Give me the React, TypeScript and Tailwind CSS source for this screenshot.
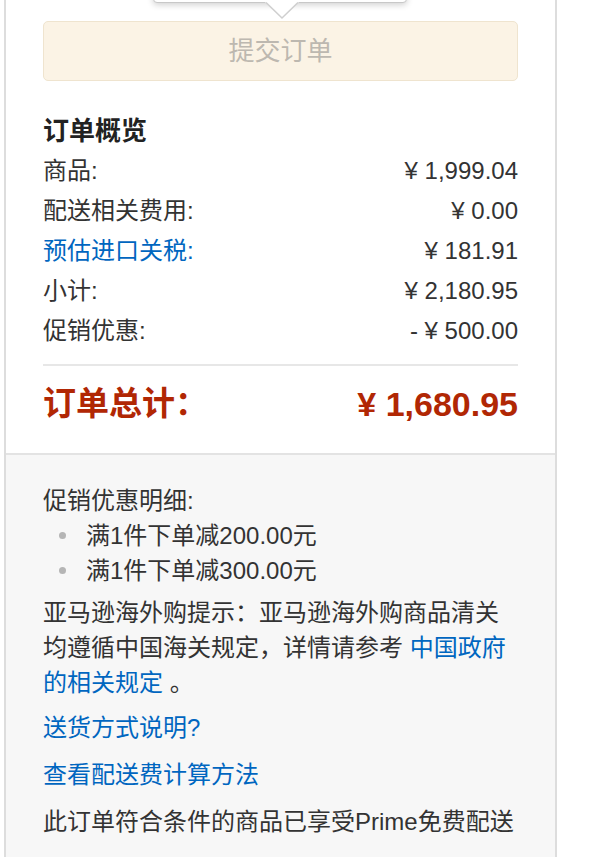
const FONT = { fontFamily: '"Liberation Sans", Arial, "Noto Sans CJK SC", sans-serif' };

const ROWS: { label: string; value: string; link?: boolean }[] = [
  { label: "商品:", value: "¥ 1,999.04" },
  { label: "配送相关费用:", value: "¥ 0.00" },
  { label: "预估进口关税:", value: "¥ 181.91", link: true },
  { label: "小计:", value: "¥ 2,180.95" },
  { label: "促销优惠:", value: "- ¥ 500.00" },
];

const PROMOS = ["满1件下单减200.00元", "满1件下单减300.00元"];

export default function App() {
  return (
    <div className="relative min-h-[857px] bg-white text-[#333]" style={FONT}>
      {/* tooltip popping above the button */}
      <div className="absolute left-[153px] top-[-40px] w-[254px] h-[43px] rounded-b-[4px] border border-[#c8c8c8] bg-white shadow-[0_2px_6px_rgba(0,0,0,0.18)] z-10" />
      <svg
        className="absolute left-[265px] top-[2px] z-20"
        width="34"
        height="18"
        viewBox="0 0 34 18"
      >
        <path d="M0 0 L17 16 L34 0 Z" fill="#fff" />
        <path d="M1 0.5 L17 16 L33 0.5" fill="none" stroke="#cfcfcf" strokeWidth="1.5" />
      </svg>

      <div className="ml-[4px] w-[553px] min-h-[857px] border-x-2 border-[#dddddd]">
        {/* white section */}
        <div className="px-[37px] pt-[21px] pb-[24px]">
          <button
            type="button"
            className="w-full h-[60px] rounded-[5px] border border-[#efe4cf] bg-[#fbf3e5] text-[26px] text-[#bdb8b0]"
          >
            提交订单
          </button>

          <h2 className="mt-[31px] text-[26px] leading-[39px] font-bold text-[#222]">订单概览</h2>

          <div>
            {ROWS.map((r) => (
              <div key={r.label} className="flex items-center justify-between h-[40px] text-[24px]">
                <span className={r.link ? "text-[#0066c0]" : "text-[#333]"}>{r.label}</span>
                <span className="text-[#333]">{r.value}</span>
              </div>
            ))}
          </div>

          <div className="mt-[13px] h-[2px] bg-[#e7e7e7]" />

          <div className="flex items-center justify-between h-[50px] mt-[13px] font-bold text-[#b12704]">
            <span className="text-[33px]">订单总计：</span>
            <span className="text-[34px]">¥ 1,680.95</span>
          </div>
        </div>

        {/* grey section */}
        <div className="border-t-2 border-[#e3e3e3] bg-[#f7f7f7] px-[37px] pt-[28px] pb-[20px] text-[24px] leading-[35px]">
          <div>促销优惠明细:</div>
          <ul>
            {PROMOS.map((p) => (
              <li key={p} className="flex items-center">
                <span className="ml-[16px] mr-[20px] w-[7px] h-[7px] rounded-full bg-[#b5b5b5]" />
                {p}
              </li>
            ))}
          </ul>

          <p className="mt-[7px]">
            亚马逊海外购提示：亚马逊海外购商品清关均遵循中国海关规定，详情请参考{" "}
            <span className="text-[#0066c0]">中国政府的相关规定</span> 。
          </p>

          <div className="mt-[10px] text-[#0066c0]">送货方式说明?</div>
          <div className="mt-[12px] text-[#0066c0]">查看配送费计算方法</div>
          <div className="mt-[12px]">此订单符合条件的商品已享受Prime免费配送</div>
        </div>
      </div>
    </div>
  );
}
